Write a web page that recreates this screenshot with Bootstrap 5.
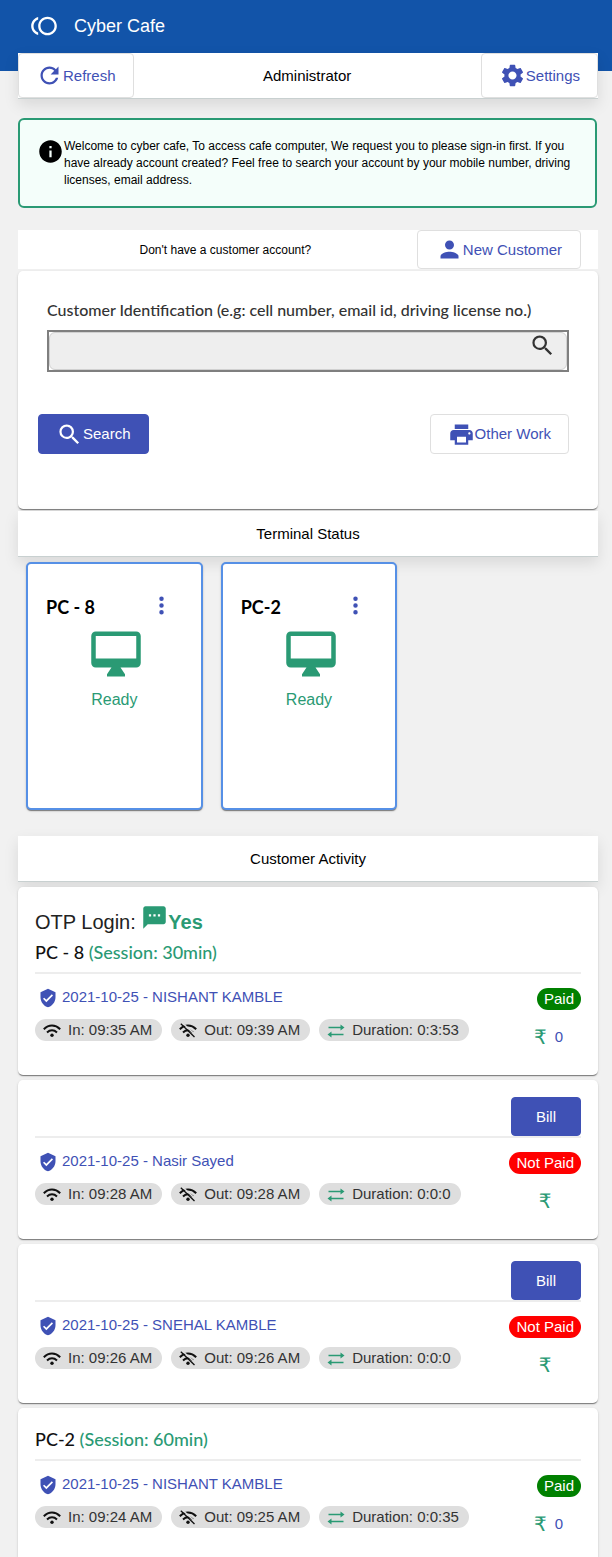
<!DOCTYPE html>
<html lang="en">
<head>
<meta charset="utf-8">
<meta name="viewport" content="width=device-width, initial-scale=1">
<title>Cyber Cafe</title>
<link rel="stylesheet" href="https://cdn.jsdelivr.net/npm/bootstrap@5.3.0/dist/css/bootstrap.min.css">
<style>
  :root { --indigo: #3f51b5; --leaf: #2a9a74; }
  body { background: #f1f1f1; font-family: "Liberation Sans", Arial, sans-serif; font-size: 15px; line-height: 22px; color: #000; }
  svg { fill: currentColor; flex: none; display: block; }
  .ic { width: 27px; height: 27px; }
  .topbar { background: #1254a9; height: 71px; padding: 12px 30px; }
  .topbar h1 { font-size: 18px; line-height: 28px; }
  .page-body { padding: 0 14px 0 18px; }
  .strip { background: #fff; border-bottom: 1px solid #c8d0d0; box-shadow: 0 6px 14px rgba(0,0,0,.1); min-height: 46px; }
  .overlap { margin-top: -18px; }
  .btn { font-size: 15px; line-height: 22px; border-radius: 4px; padding: 0 17px; height: 39px; display: inline-flex; align-items: center; justify-content: center; }
  .btn-line { --bs-btn-color: var(--indigo); --bs-btn-bg: #fff; --bs-btn-border-color: #dfdfdf; --bs-btn-hover-color: var(--indigo); --bs-btn-hover-bg: #f5f6fc; --bs-btn-hover-border-color: #dfdfdf; }
  .btn-fill { --bs-btn-color: #fff; --bs-btn-bg: var(--indigo); --bs-btn-border-color: var(--indigo); --bs-btn-hover-color: #fff; --bs-btn-hover-bg: #35459d; }
  .btn-tall { height: 45px; }
  .notice { margin: 19px 1px 22px 0; padding: 18px 17px 17px; border: 2px solid var(--leaf); border-radius: 6px; background: #f4fefa; font-size: 12px; line-height: 17px; min-height: 90px; }
  .notice p { padding-right: 4px; }
  .panel { background: #fff; border-radius: 5px; box-shadow: 0 2px 1px -1px rgba(0,0,0,.3), 0 1px 1px rgba(0,0,0,.2), 0 1px 3px rgba(0,0,0,.12); }
  .account { padding-right: 17px; }
  .account .btn { padding: 0 18px; }
  .ask { font-size: 12px; }
  .lato { font-family: Lato, "Noto Sans", sans-serif; }
  .finder { margin: 2px 0; padding: 27px 29px 55px 20px; }
  .finder label { font-size: 16px; line-height: 24px; color: #333; font-weight: 500; }
  .find-box { margin-left: 9px; }
  .field { border: 2px solid #7f7f7f; }
  .field input { height: 38px; border: 1px solid #d0d0d0; border-radius: 6px; background: #eee; padding-right: 48px; }
  .field button { right: 11px; top: 0; color: #333; }
  .actions { margin-top: 42px; }
  .actions .btn { height: 40px; }
  .terminals { margin: 5px -3px 26px -1px; }
  .terminals > div { padding: 0 9px; }
  .terminal { border: 2px solid #5690e6; min-height: 248px; padding: 28px 18px; color: var(--leaf); font-size: 16px; }
  .terminal h2 { font-size: 18px; line-height: 30px; font-weight: 700; color: #000; }
  .dots { color: var(--indigo); margin-right: 8px; }
  .monitor { width: 58px; height: 54px; margin: 5px auto 0; padding-left: 4px; }
  .visit { margin-top: 5px; padding: 17px 17px 27px; }
  .otp { font-size: 20px; line-height: 36px; height: 34px; color: #222; }
  .session { font-size: 18px; line-height: 28px; padding-bottom: 6px; font-weight: 500; color: #111; }
  .green { color: var(--leaf); }
  .rule { border-top: 2px solid #ededed; padding-top: 14px; }
  .who { color: var(--indigo); height: 31px; line-height: 18px; padding-left: 3px; }
  .who svg { width: 20px; height: 20px; }
  .chips { gap: 9px; }
  .chip { background: #dedede; color: #333; border-radius: 11px; padding: 0 10px 0 8px; height: 22px; gap: 7px; white-space: nowrap; }
  .chip svg { width: 18px; height: 15px; margin-top: 4px; color: #111; }
  .chip .green { color: var(--leaf); }
  .state { border-radius: 11px; padding: 0 7px; height: 22px; color: #fff; }
  .paid { background: green; }
  .unpaid { background: red; }
  .amount { margin-top: 16px; height: 22px; color: var(--indigo); }
  .amount.priced { padding-right: 18px; }
  .amount .green { font-size: 20px; font-family: "DejaVu Sans", sans-serif; }
</style>
</head>
<body>
<svg class="d-none" aria-hidden="true">
  <symbol id="shield" viewBox="0 0 24 24"><path d="M12 1 3 5v6c0 5.550 3.840 10.740 9 12 5.160-1.260 9-6.450 9-12V5l-9-4zm-2 16-4-4 1.410-1.410L10 14.170l6.590-6.590L18 9l-8 8z"/></symbol>
  <symbol id="wifi" viewBox="0 0 18 15"><g fill="none" stroke="currentColor" stroke-width="2"><path d="M.8 6.200Q4.500 2.500 9 2.500t8.200 3.700"/><path d="M4 9.400Q6.300 7.300 9 7.300t5 2.100"/></g><circle cx="9" cy="12.300" r="1.700"/></symbol>
  <symbol id="wifi-off" viewBox="0 0 18 15"><g fill="none" stroke="currentColor" stroke-width="2"><path d="M.8 6.200Q4.500 2.500 9 2.500t8.200 3.700"/><path d="M4 9.400Q6.300 7.300 9 7.300t5 2.100"/></g><circle cx="9" cy="12.300" r="1.700"/><path d="M3.500 0 17 12.500" stroke="#dedede" stroke-width="1.600"/><path d="M1.800.8 15.500 14" stroke="currentColor" stroke-width="1.300"/></symbol>
  <symbol id="swap" viewBox="0 0 18 15"><path d="M1.500 4.500H15M3 11.500h13.500" fill="none" stroke="currentColor" stroke-width="1.500"/><path d="m13.500 1.500 4 3-4 3zM4.500 8.500l-4 3 4 3z"/></symbol>
  <symbol id="dots" viewBox="0 0 24 24"><path d="M12 8a2 2 0 1 0 0-4 2 2 0 0 0 0 4zm0 2a2 2 0 1 0 0 4 2 2 0 0 0 0-4zm0 6a2 2 0 1 0 0 4 2 2 0 0 0 0-4z"/></symbol>
  <symbol id="monitor" viewBox="0 0 24 24"><path d="M21 2H3c-1.100 0-2 .9-2 2v12c0 1.100.9 2 2 2h7l-2 3v1h8v-1l-2-3h7c1.100 0 2-.9 2-2V4c0-1.100-.9-2-2-2zm0 12H3V4h18v10z"/></symbol>
  <symbol id="search" viewBox="0 0 24 24"><path d="M15.500 14h-.79l-.28-.27A6.471 6.471 0 0 0 16 9.500 6.500 6.500 0 1 0 9.500 16c1.610 0 3.090-.59 4.230-1.570l.27.28v.79l5 4.990L20.490 19l-4.990-5zm-6 0C7.010 14 5 11.990 5 9.500S7.010 5 9.500 5 14 7.010 14 9.500 11.990 14 9.500 14z"/></symbol>
</svg>

<header class="topbar text-white">
  <div class="d-flex align-items-center">
    <svg width="28" height="28" viewBox="0 0 24 24"><path d="M15 4c-4.420 0-8 3.580-8 8s3.580 8 8 8 8-3.580 8-8-3.580-8-8-8zm0 14c-3.310 0-6-2.690-6-6s2.690-6 6-6 6 2.690 6 6-2.690 6-6 6zM3 12c0-2.610 1.670-4.830 4-5.650V4.260C3.550 5.150 1 8.270 1 12s2.550 6.850 6 7.740v-2.090c-2.330-.82-4-3.040-4-5.650z"/></svg>
    <h1 class="mb-0 ms-3 fw-normal">Cyber Cafe</h1>
  </div>
</header>

<main class="page-body">
  <nav class="strip overlap d-flex justify-content-between">
    <button type="button" class="btn btn-line btn-tall"><svg class="ic" viewBox="0 0 24 24"><path d="M17.650 6.350C16.200 4.900 14.210 4 12 4c-4.420 0-7.990 3.580-7.990 8s3.570 8 7.990 8c3.730 0 6.840-2.550 7.730-6h-2.080c-.82 2.330-3.040 4-5.650 4-3.310 0-6-2.690-6-6s2.690-6 6-6c1.660 0 3.140.69 4.220 1.780L13 11h7V4l-2.350 2.350z"/></svg>Refresh</button>
    <span class="align-self-center">Administrator</span>
    <button type="button" class="btn btn-line btn-tall"><svg class="ic" viewBox="0 0 24 24"><path d="M19.140 12.940c.04-.3.060-.61.060-.94 0-.32-.02-.64-.07-.94l2.030-1.580c.18-.14.23-.41.12-.61l-1.920-3.320c-.12-.22-.37-.29-.59-.22l-2.390.96c-.5-.38-1.030-.7-1.620-.94l-.36-2.540c-.04-.24-.24-.41-.48-.41h-3.840c-.24 0-.43.17-.47.41l-.36 2.540c-.59.24-1.130.57-1.620.94l-2.390-.96c-.22-.08-.47 0-.59.22L2.740 8.870c-.12.21-.08.47.12.61l2.030 1.580c-.05.3-.09.63-.09.94s.02.64.07.94l-2.030 1.580c-.18.14-.23.41-.12.61l1.920 3.320c.12.22.37.29.59.22l2.390-.96c.5.38 1.030.7 1.620.94l.36 2.540c.05.24.24.41.48.41h3.840c.24 0 .44-.17.47-.41l.36-2.540c.59-.24 1.130-.56 1.620-.94l2.390.96c.22.08.47 0 .59-.22l1.920-3.320c.12-.22.070-.47-.12-.61l-2.010-1.580zM12 15.600c-1.980 0-3.600-1.620-3.600-3.600s1.620-3.600 3.600-3.600 3.600 1.620 3.600 3.600-1.620 3.600-3.600 3.600z"/></svg>Settings</button>
  </nav>

  <section class="notice d-flex align-items-start">
    <svg class="ic" viewBox="0 0 24 24"><path d="M12 2C6.480 2 2 6.480 2 12s4.480 10 10 10 10-4.480 10-10S17.520 2 12 2zm1 15h-2v-6h2v6zm0-8h-2V7h2v2z"/></svg>
    <p class="mb-0">Welcome to cyber cafe, To access cafe computer, We request you to please sign-in first. If you have already account created? Feel free to search your account by your mobile number, driving licenses, email address.</p>
  </section>

  <div class="account bg-white d-flex align-items-center">
    <span class="ask flex-grow-1 text-center ps-3">Don't have a customer account?</span>
    <button type="button" class="btn btn-line"><svg class="ic" viewBox="0 0 24 24"><path d="M12 12c2.210 0 4-1.790 4-4s-1.790-4-4-4-4 1.790-4 4 1.790 4 4 4zm0 2c-2.670 0-8 1.340-8 4v2h16v-2c0-2.660-5.330-4-8-4z"/></svg>New Customer</button>
  </div>

  <form class="panel finder">
    <div class="find-box">
      <label for="ident" class="lato d-block mb-2">Customer Identification (e.g: cell number, email id, driving license no.)</label>
      <div class="field position-relative">
        <input id="ident" type="text" class="form-control shadow-none">
        <button type="button" class="position-absolute border-0 bg-transparent p-0" aria-label="Find"><svg class="ic"><use href="#search"/></svg></button>
      </div>
    </div>
    <div class="d-flex justify-content-between actions">
      <button type="submit" class="btn btn-fill"><svg class="ic"><use href="#search"/></svg>Search</button>
      <button type="button" class="btn btn-line"><svg class="ic" viewBox="0 0 24 24"><path d="M19 8H5c-1.660 0-3 1.340-3 3v6h4v4h12v-4h4v-6c0-1.660-1.340-3-3-3zm-3 11H8v-5h8v5zm3-7c-.55 0-1-.45-1-1s.45-1 1-1 1 .45 1 1-.45 1-1 1zm-1-9H6v4h12V3z"/></svg>Other Work</button>
    </div>
  </form>

  <div class="strip d-flex align-items-center justify-content-center">Terminal Status</div>

  <div class="terminals row">
    <div class="col-4">
      <article class="panel terminal">
        <div class="d-flex justify-content-between align-items-start"><h2 class="lato mb-0">PC - 8</h2><button type="button" class="dots border-0 bg-transparent p-0" aria-label="Options"><svg class="ic"><use href="#dots"/></svg></button></div>
        <svg class="monitor"><use href="#monitor"/></svg>
        <div class="text-center mt-2">Ready</div>
      </article>
    </div>
    <div class="col-4">
      <article class="panel terminal">
        <div class="d-flex justify-content-between align-items-start"><h2 class="lato mb-0">PC-2</h2><button type="button" class="dots border-0 bg-transparent p-0" aria-label="Options"><svg class="ic"><use href="#dots"/></svg></button></div>
        <svg class="monitor"><use href="#monitor"/></svg>
        <div class="text-center mt-2">Ready</div>
      </article>
    </div>
  </div>

  <div class="strip d-flex align-items-center justify-content-center">Customer Activity</div>

  <article class="panel visit">
    <div class="otp d-flex">OTP Login:&nbsp;<svg class="ic green" viewBox="0 0 24 24"><path d="M20 2H4c-1.100 0-1.990.9-1.990 2L2 22l4-4h14c1.100 0 2-.9 2-2V4c0-1.100-.9-2-2-2zM9 11H7V9h2v2zm4 0h-2V9h2v2zm4 0h-2V9h2v2z"/></svg><b class="green">Yes</b></div>
    <div class="session lato">PC - 8 <span class="green">(Session: 30min)</span></div>
    <div class="rule d-flex justify-content-between">
      <div>
        <a href="#" class="who d-flex text-decoration-none"><svg><use href="#shield"/></svg><span class="ms-1">2021-10-25 - NISHANT KAMBLE</span></a>
        <div class="chips d-flex"><span class="chip d-flex"><svg><use href="#wifi"/></svg>In: 09:35 AM</span><span class="chip d-flex"><svg><use href="#wifi-off"/></svg>Out: 09:39 AM</span><span class="chip d-flex"><svg class="green"><use href="#swap"/></svg>Duration: 0:3:53</span></div>
      </div>
      <div class="d-flex flex-column align-items-end"><span class="state paid">Paid</span><div class="amount priced d-flex"><span class="green">₹</span><span class="ms-2">0</span></div></div>
    </div>
  </article>

  <article class="panel visit">
    <div class="d-flex justify-content-end"><button type="button" class="btn btn-fill px-4">Bill</button></div>
    <div class="rule d-flex justify-content-between">
      <div>
        <a href="#" class="who d-flex text-decoration-none"><svg><use href="#shield"/></svg><span class="ms-1">2021-10-25 - Nasir Sayed</span></a>
        <div class="chips d-flex"><span class="chip d-flex"><svg><use href="#wifi"/></svg>In: 09:28 AM</span><span class="chip d-flex"><svg><use href="#wifi-off"/></svg>Out: 09:28 AM</span><span class="chip d-flex"><svg class="green"><use href="#swap"/></svg>Duration: 0:0:0</span></div>
      </div>
      <div class="d-flex flex-column align-items-center"><span class="state unpaid">Not Paid</span><div class="amount d-flex"><span class="green">₹</span></div></div>
    </div>
  </article>

  <article class="panel visit">
    <div class="d-flex justify-content-end"><button type="button" class="btn btn-fill px-4">Bill</button></div>
    <div class="rule d-flex justify-content-between">
      <div>
        <a href="#" class="who d-flex text-decoration-none"><svg><use href="#shield"/></svg><span class="ms-1">2021-10-25 - SNEHAL KAMBLE</span></a>
        <div class="chips d-flex"><span class="chip d-flex"><svg><use href="#wifi"/></svg>In: 09:26 AM</span><span class="chip d-flex"><svg><use href="#wifi-off"/></svg>Out: 09:26 AM</span><span class="chip d-flex"><svg class="green"><use href="#swap"/></svg>Duration: 0:0:0</span></div>
      </div>
      <div class="d-flex flex-column align-items-center"><span class="state unpaid">Not Paid</span><div class="amount d-flex"><span class="green">₹</span></div></div>
    </div>
  </article>

  <article class="panel visit">
    <div class="session lato">PC-2 <span class="green">(Session: 60min)</span></div>
    <div class="rule d-flex justify-content-between">
      <div>
        <a href="#" class="who d-flex text-decoration-none"><svg><use href="#shield"/></svg><span class="ms-1">2021-10-25 - NISHANT KAMBLE</span></a>
        <div class="chips d-flex"><span class="chip d-flex"><svg><use href="#wifi"/></svg>In: 09:24 AM</span><span class="chip d-flex"><svg><use href="#wifi-off"/></svg>Out: 09:25 AM</span><span class="chip d-flex"><svg class="green"><use href="#swap"/></svg>Duration: 0:0:35</span></div>
      </div>
      <div class="d-flex flex-column align-items-end"><span class="state paid">Paid</span><div class="amount priced d-flex"><span class="green">₹</span><span class="ms-2">0</span></div></div>
    </div>
  </article>
</main>
<script src="https://cdn.jsdelivr.net/npm/bootstrap@5.3.0/dist/js/bootstrap.bundle.min.js"></script>
</body>
</html>
